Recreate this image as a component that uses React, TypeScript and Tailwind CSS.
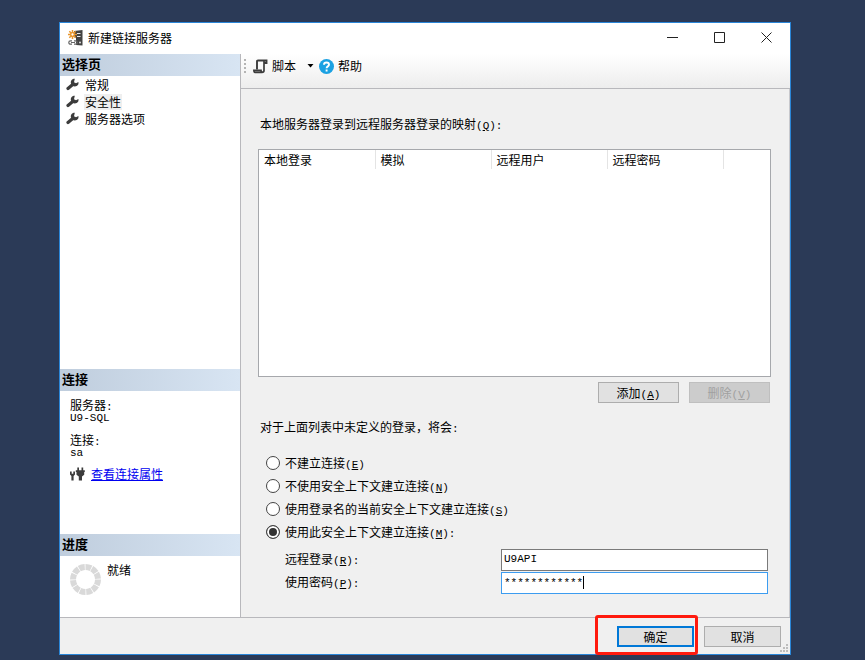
import { useState } from "react";
import type { ReactNode } from "react";

const pages = ["常规", "安全性", "服务器选项"];

const columns = ["本地登录", "模拟", "远程用户", "远程密码"];

const loginModes = [
  { id: "none", label: "不建立连接", k: "E", tail: "" },
  { id: "nocontext", label: "不使用安全上下文建立连接", k: "N", tail: "" },
  { id: "current", label: "使用登录名的当前安全上下文建立连接", k: "S", tail: "" },
  { id: "this", label: "使用此安全上下文建立连接", k: "M", tail: ":" },
];

export default function App() {
  return (
    <div className="flex min-h-screen flex-col bg-[#2b3a57] pt-[22px] pr-[74px] pb-[5px] pl-[59px] font-['Noto_Sans_CJK_SC',sans-serif] text-[12px] leading-4 text-black">
      <div className="flex flex-1 flex-col border border-[#2a86d8] bg-[#f0f0f0]">
        <TitleBar />
        <div className="flex flex-1 border-b border-[#b8b8bc]">
          <Sidebar />
          <main className="flex flex-1 flex-col">
            <Toolbar />
            <SecurityPage />
          </main>
        </div>
        <Footer />
      </div>
    </div>
  );
}

function TitleBar() {
  return (
    <header className="flex h-[31px] items-center bg-white pb-[2px] pl-2">
      <ServerIcon />
      <h1 className="ml-[5px] flex-1">新建链接服务器</h1>
      <div className="flex h-full">
        <button aria-label="最小化" className="flex w-[47px] items-center justify-center">
          <svg width="11" height="11" stroke="#222" fill="none">
            <path d="M0 5.5h11" />
          </svg>
        </button>
        <button aria-label="最大化" className="flex w-[47px] items-center justify-center">
          <svg width="11" height="11" stroke="#222" fill="none">
            <path d="M.5.5h10v10H.5z" />
          </svg>
        </button>
        <button aria-label="关闭" className="flex w-[47px] items-center justify-center">
          <svg width="11" height="11" stroke="#222" fill="none">
            <path d="M.5.5l10 10M10.5.5l-10 10" />
          </svg>
        </button>
      </div>
    </header>
  );
}

function Sidebar() {
  return (
    <aside className="flex w-[181px] flex-none flex-col border-r border-[#b8b8bc] bg-white">
      <SectionTitle>选择页</SectionTitle>
      <ul className="flex-1">
        {pages.map((p) => (
          <li key={p} className="flex h-[17px] items-center pl-[6px]">
            <WrenchIcon />
            <button className={"ml-[5px] px-px " + (p === "安全性" ? "bg-[#efefef]" : "")}>{p}</button>
          </li>
        ))}
      </ul>

      <SectionTitle>连接</SectionTitle>
      <div className="h-[143px] pt-[6px] pl-[10px]">
        <p className="h-[14px]">
          服务器<Mono>:</Mono>
        </p>
        <p className="h-3 leading-[10px]">
          <Mono>U9-SQL</Mono>
        </p>
        <p className="mt-[9px] h-[14px]">
          连接<Mono>:</Mono>
        </p>
        <p className="h-3 leading-[10px]">
          <Mono>sa</Mono>
        </p>
        <div className="mt-2 flex items-center gap-[6px]">
          <PlugIcon />
          <a href="#connection" className="text-[#0000f0] underline">
            查看连接属性
          </a>
        </div>
      </div>

      <SectionTitle>进度</SectionTitle>
      <div className="flex h-[61px] items-start gap-[6px] pt-[6px] pl-[10px]">
        <svg width="31" height="31" viewBox="0 0 31 31" className="mt-[2px]">
          <circle cx="15.5" cy="15.5" r="12.5" fill="none" stroke="#d9d9d9" strokeWidth="6" pathLength="120" strokeDasharray="8.8 1.2" />
        </svg>
        <span>就绪</span>
      </div>
    </aside>
  );
}

function SectionTitle({ children }: { children: ReactNode }) {
  return (
    <h2 className="h-[22px] bg-gradient-to-r from-[#bfcddd] to-[#d8e5f3] pl-[2px] text-[13px] leading-5 font-bold">
      {children}
    </h2>
  );
}

function Toolbar() {
  return (
    <div className="flex h-[35px] items-center border-b border-[#b8b8bc] bg-gradient-to-b from-white to-[#ededed] pb-[10px]">
      <svg width="3" height="16" className="ml-[3px]" fill="#b4b4b4">
        <path d="M0 1h2v2H0zM0 5h2v2H0zM0 9h2v2H0zM0 13h2v2H0z" />
      </svg>
      <button className="ml-[6px] flex items-center gap-1">
        <ScriptIcon />
        脚本
        <svg width="7" height="4" className="ml-[7px]">
          <path d="M.5 0h6l-3 3.5z" />
        </svg>
      </button>
      <button className="ml-[5px] flex items-center gap-1">
        <svg width="15" height="15" viewBox="0 0 15 15">
          <circle cx="7.5" cy="7.5" r="7.5" fill="#1ba1e2" />
          <path d="M5 5.8C5 2.8 10 2.8 10 5.8 10 7.5 7.6 7.3 7.6 9.2M7.6 10.4v2" fill="none" stroke="#fff" strokeWidth="1.9" />
        </svg>
        帮助
      </button>
    </div>
  );
}

function SecurityPage() {
  const [mode, setMode] = useState("this");

  return (
    <section className="flex flex-1 flex-col border-r border-[#c8c8cc] pt-[27px] pr-[18px] pl-[17px]">
      <p className="h-4 pl-[2px]">
        本地服务器登录到远程服务器登录的映射
        <Key k="Q" tail=":" />
      </p>

      <div className="mt-[17px] h-[228px] border border-[#a6a8ac] bg-white">
        <table className="w-full table-fixed border-collapse text-left">
          <thead>
            <tr className="h-[19px]">
              {columns.map((c) => (
                <th key={c} className="w-[116px] border-r border-[#e4e4e4] pl-[5px] font-normal">
                  {c}
                </th>
              ))}
              <td />
            </tr>
          </thead>
        </table>
      </div>

      <div className="mt-[5px] flex justify-end gap-[10px] pr-px">
        <button className="h-[21px] w-[81px] border border-[#adadad] bg-[#e1e1e1]">
          添加
          <Key k="A" />
        </button>
        <button disabled className="h-[21px] w-[81px] border border-[#bfbfbf] bg-[#cccccc] text-[#a0a0a0]">
          删除
          <Key k="V" />
        </button>
      </div>

      <p className="mt-4 h-4 pl-[2px]">
        对于上面列表中未定义的登录，将会<Mono>:</Mono>
      </p>

      <fieldset className="mt-4 pl-2">
        {loginModes.map((m) => (
          <label key={m.id} className="flex h-[23px] items-center gap-[5px]">
            <input
              type="radio"
              name="mode"
              checked={mode === m.id}
              onChange={() => setMode(m.id)}
              className="h-[14px] w-[14px] appearance-none rounded-full border border-[#444] bg-white checked:bg-[#333] checked:shadow-[inset_0_0_0_2px_white]"
            />
            <span>
              {m.label}
              <Key k={m.k} tail={m.tail} />
            </span>
          </label>
        ))}
      </fieldset>

      <div className="mt-[6px] flex items-start pr-[3px] pl-[27px]">
        <label htmlFor="login" className="flex-1 pt-[2px]">
          远程登录
          <Key k="R" tail=":" />
        </label>
        <input
          id="login"
          defaultValue="U9API"
          className="h-[22px] w-[267px] border border-[#7a7a7a] bg-white px-[2px] pb-[3px] font-['Liberation_Mono',monospace] text-[11px] outline-none"
        />
      </div>
      <div className="mt-px flex items-start pr-[3px] pl-[27px]">
        <label htmlFor="password" className="flex-1 pt-[2px]">
          使用密码
          <Key k="P" tail=":" />
        </label>
        <div className="relative w-[267px]">
          <input
            id="password"
            defaultValue="************"
            className="block h-[22px] w-full border border-[#3c9cf0] bg-white px-[2px] font-['Liberation_Mono',monospace] text-[11px] outline-none"
          />
          <span className="absolute top-1 left-[82px] h-[13px] w-px bg-black" />
        </div>
      </div>
    </section>
  );
}

function Footer() {
  return (
    <footer className="relative flex h-9 items-start justify-end gap-[10px] pt-2 pr-[9px]">
      <div className="relative">
        <button className="block h-[21px] w-[77px] border-2 border-[#0078d7] bg-[#e1e1e1] leading-4">确定</button>
        <span className="pointer-events-none absolute -top-[11px] -right-1 -bottom-2 -left-[22px] rounded-[3px] border-3 border-[#ff1a0e]" />
      </div>
      <button className="h-[21px] w-[77px] border border-[#adadad] bg-[#e1e1e1]">取消</button>
      <svg width="9" height="9" className="absolute right-px bottom-px" fill="#bdbdbd">
        <path d="M6 0h2v2H6zM3 3h2v2H3zM6 3h2v2H6zM0 6h2v2H0zM3 6h2v2H3zM6 6h2v2H6z" />
      </svg>
    </footer>
  );
}

function Mono({ children }: { children: ReactNode }) {
  return <span className="font-['Liberation_Mono',monospace] text-[11px] leading-none">{children}</span>;
}

// access key in brackets, e.g. (A)
function Key({ k, tail = "" }: { k: string; tail?: string }) {
  return (
    <Mono>
      (<u>{k}</u>){tail}
    </Mono>
  );
}

function WrenchIcon() {
  return (
    <svg width="13" height="13" viewBox="0 0 13 13" fill="none">
      <path d="M2 10.500L7 6.300" stroke="#3c3c3c" strokeWidth="3.200" strokeLinecap="round" />
      <path d="M8.800.800C6.200.800 4.300 2.900 4.900 5.300 5.500 8 8.500 9.200 10.700 8 12.200 7.200 12.800 5.600 12.400 3.900L10 5.300 8 4.300z" fill="#3c3c3c" />
    </svg>
  );
}

function ServerIcon() {
  return (
    <svg width="15" height="16" viewBox="0 0 15 16" fill="none">
      <path d="M6 1l8.500-1v15.500L8 15V8L6 7z" fill="#424242" />
      <path d="M9 3.500h3.500M9 6.500h3.500" stroke="#e8e8e8" strokeWidth="1.200" />
      <circle cx="12" cy="12.500" r="1" fill="#ddd" />
      <path d="M4.500 0v9M0 4.500h9M1.300 1.300l6.400 6.400M7.700 1.300L1.300 7.700" stroke="#e8962e" strokeWidth="1.500" />
      <circle cx="4.500" cy="4.500" r="1.800" fill="#fff" stroke="#e8962e" strokeWidth="1.300" />
      <path d="M4 10.800H2.500a1.700 1.700 0 000 3.400H4M6 10.800H7.500a1.700 1.700 0 010 3.400H6M3 12.500h4" stroke="#666" strokeWidth="1.200" />
    </svg>
  );
}

function ScriptIcon() {
  return (
    <svg width="15" height="15" viewBox="0 0 15 15" fill="none" stroke="#3c3c3c">
      <path d="M4 10.500V2.500Q4 1.500 5 1.500H13.500V4H11" strokeWidth="1.900" />
      <path d="M11 2v9.500Q11 13.300 9 13.300H2Q.9 13.300.9 11.300H8Q8 13.200 9.300 13.200" strokeWidth="1.700" />
    </svg>
  );
}

function PlugIcon() {
  return (
    <svg width="15" height="14" viewBox="0 0 15 14" fill="#3c3c3c">
      <path d="M0 4.500h1.700v2.300h1.600V4.500H5v3L3.600 9v4.500H1.400V9L0 7.500z" />
      <path d="M7.300.500H9v2.800h2.500V.500h1.700v2.800h1.600V5h-.600v2.800L12 9.600v3.900H8.800V9.600L6.500 7.800V5H5.800V3.300h1.500z" />
    </svg>
  );
}
